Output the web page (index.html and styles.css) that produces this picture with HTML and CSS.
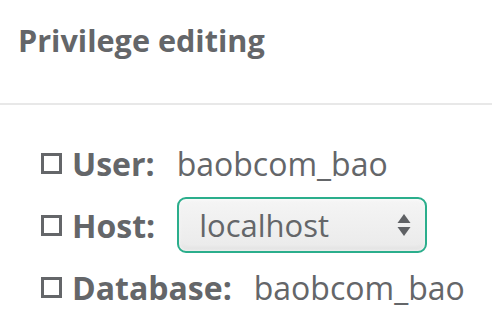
FILE: index.html
```html
<!DOCTYPE html>
<html lang="en">
<head>
  <meta charset="UTF-8">
  <title>Privilege editing</title>
  <link rel="stylesheet" href="styles.css">
</head>
<body>
  <div class="panel-head">
    <h2>Privilege editing</h2>
  </div>
  <div class="panel-body">
    <div class="field">
      <span class="check"></span>
      <label>User:</label>
      <span class="value">baobcom_bao</span>
    </div>
    <div class="field">
      <span class="check"></span>
      <label>Host:</label>
      <div class="select">
        <span>localhost</span>
        <svg class="arrows" width="14" height="24" viewBox="0 0 14 24">
          <path d="M7 1 L13.5 10 L0.5 10 Z" fill="#5f6164"/>
          <path d="M0.5 14 L13.5 14 L7 23 Z" fill="#5f6164"/>
        </svg>
      </div>
    </div>
    <div class="field">
      <span class="check"></span>
      <label>Database:</label>
      <span class="value">baobcom_bao</span>
    </div>
  </div>
</body>
</html>
```

FILE: styles.css
```css
body {
  margin: 0;
  font-family: "Open Sans", sans-serif;
  color: #646669;
  background: #fff;
}
.panel-head {
  padding: 17px 18px 0 18px;
  height: 86px;
  border-bottom: 2px solid #e8e8e8;
}
.panel-head h2 {
  margin: 0;
  font-size: 30.6px;
  font-weight: 700;
  line-height: 46px;
}
.panel-body {
  padding: 35px 0 0 41px;
  display: flex;
  flex-direction: column;
  gap: 16px;
}
.field {
  display: flex;
  align-items: center;
  height: 46px;
  font-size: 32px;
}
.check {
  width: 15px;
  height: 15px;
  border: 3px solid #646669;
  margin-right: 10px;
}
.field label {
  font-weight: 700;
  margin-right: 22px;
}
.select {
  width: 250px;
  height: 56px;
  box-sizing: border-box;
  border: 2px solid #2bae8c;
  border-radius: 9px;
  background: linear-gradient(#f5f5f5, #eaeaea);
  box-shadow: inset 0 0 4px rgba(255, 255, 255, 1), inset 0 -3px 4px rgba(0, 0, 0, 0.06);
  display: flex;
  align-items: center;
  justify-content: space-between;
  padding: 0 14px 0 20px;
  font-size: 31px;
}
```
